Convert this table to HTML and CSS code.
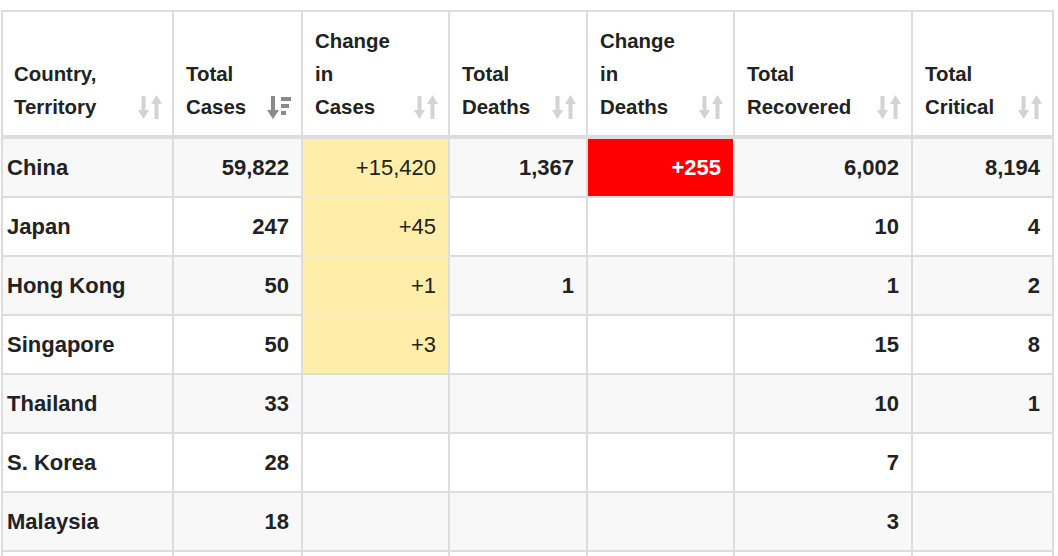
FILE: index.html
```html
<!DOCTYPE html>
<html>
<head>
<meta charset="utf-8">
<link rel="stylesheet" href="styles.css">
</head>
<body>
<svg width="0" height="0" class="defs">
  <defs>
    <symbol id="sort-both" viewBox="0 0 24 24">
      <rect x="3.5" y="1" width="4" height="15"/>
      <polygon points="0,15 11,15 5.5,24"/>
      <polygon points="13,9 24,9 18.5,0"/>
      <rect x="16.5" y="8" width="4" height="16"/>
    </symbol>
    <symbol id="sort-desc" viewBox="0 0 24 24">
      <rect x="4" y="1" width="4" height="15"/>
      <polygon points="0,15 12,15 6,24"/>
      <rect x="14" y="2" width="10" height="4"/>
      <rect x="14" y="9" width="8" height="4"/>
      <rect x="14" y="16" width="5" height="4"/>
    </symbol>
  </defs>
</svg>
<table class="stats">
  <colgroup>
    <col class="c1"><col class="c2"><col class="c3"><col class="c4"><col class="c5"><col class="c6"><col class="c7">
  </colgroup>
  <thead>
    <tr>
      <th><div class="hd"><span>Country,<br>Territory</span><svg class="sort"><use href="#sort-both"/></svg></div></th>
      <th><div class="hd"><span>Total<br>Cases</span><svg class="sort active"><use href="#sort-desc"/></svg></div></th>
      <th><div class="hd"><span>Change<br>in<br>Cases</span><svg class="sort"><use href="#sort-both"/></svg></div></th>
      <th><div class="hd"><span>Total<br>Deaths</span><svg class="sort"><use href="#sort-both"/></svg></div></th>
      <th><div class="hd"><span>Change<br>in<br>Deaths</span><svg class="sort"><use href="#sort-both"/></svg></div></th>
      <th><div class="hd"><span>Total<br>Recovered</span><svg class="sort"><use href="#sort-both"/></svg></div></th>
      <th><div class="hd"><span>Total<br>Critical</span><svg class="sort"><use href="#sort-both"/></svg></div></th>
    </tr>
  </thead>
  <tbody>
    <tr>
      <td class="name">China</td><td>59,822</td><td class="new-cases joined">+15,420</td><td>1,367</td><td class="new-deaths">+255</td><td>6,002</td><td>8,194</td>
    </tr>
    <tr>
      <td class="name">Japan</td><td>247</td><td class="new-cases joined">+45</td><td></td><td></td><td>10</td><td>4</td>
    </tr>
    <tr>
      <td class="name">Hong Kong</td><td>50</td><td class="new-cases joined">+1</td><td>1</td><td></td><td>1</td><td>2</td>
    </tr>
    <tr>
      <td class="name">Singapore</td><td>50</td><td class="new-cases">+3</td><td></td><td></td><td>15</td><td>8</td>
    </tr>
    <tr>
      <td class="name">Thailand</td><td>33</td><td></td><td></td><td></td><td>10</td><td>1</td>
    </tr>
    <tr>
      <td class="name">S. Korea</td><td>28</td><td></td><td></td><td></td><td>7</td><td></td>
    </tr>
    <tr>
      <td class="name">Malaysia</td><td>18</td><td></td><td></td><td></td><td>3</td><td></td>
    </tr>
    <tr>
      <td class="name"></td><td></td><td></td><td></td><td></td><td></td><td></td>
    </tr>
  </tbody>
</table>
</body>
</html>
```

FILE: styles.css
```css
html, body {
  margin: 0;
  padding: 0;
  background: #fff;
}
body {
  padding: 10px 0 0 1px;
  font-family: "Liberation Sans", Arial, sans-serif;
  color: #222;
}
.defs {
  position: absolute;
  width: 0;
  height: 0;
  overflow: hidden;
}
.stats {
  table-layout: fixed;
  width: 1053px;
  border-collapse: separate;
  border-spacing: 0;
  border-top: 2px solid #ddd;
  border-left: 2px solid #ddd;
}
.c1 { width: 171px; }
.c2 { width: 129px; }
.c3 { width: 147px; }
.c4 { width: 138px; }
.c5 { width: 147px; }
.c6 { width: 178px; }
.c7 { width: 141px; }

.stats th {
  vertical-align: bottom;
  text-align: left;
  font-size: 20.4px;
  font-weight: bold;
  line-height: 33px;
  padding: 13px 10px 11px 12px;
  border-right: 2px solid #ddd;
  border-bottom: 4px solid #ddd;
  background: #fff;
}
.stats th:first-child {
  padding-left: 11px;
}
.hd {
  display: flex;
  align-items: flex-end;
  justify-content: space-between;
}
.sort {
  width: 24px;
  height: 24px;
  flex: none;
  margin-bottom: 5px;
  fill: #d3d3d3;
}
.sort.active {
  fill: #8a8a8a;
}

.stats td {
  height: 57px;
  padding: 0 12px 0 4px;
  font-size: 22px;
  font-weight: bold;
  line-height: 33px;
  text-align: right;
  vertical-align: middle;
  border-right: 2px solid #ddd;
  border-bottom: 2px solid #ddd;
}
.stats td.name {
  text-align: left;
  padding-left: 4px;
}
.stats tbody tr:nth-child(odd) td {
  background: #f8f8f8;
}
.stats tbody tr:nth-child(even) td {
  background: #fff;
}
.stats tbody tr td.new-cases {
  background: #ffeeaa;
  font-weight: normal;
}
.stats tbody tr td.new-cases.joined {
  border-bottom-color: #f6eccb;
}
.stats tbody tr td.new-deaths {
  background: #ff0000;
  color: #fff;
}
```
